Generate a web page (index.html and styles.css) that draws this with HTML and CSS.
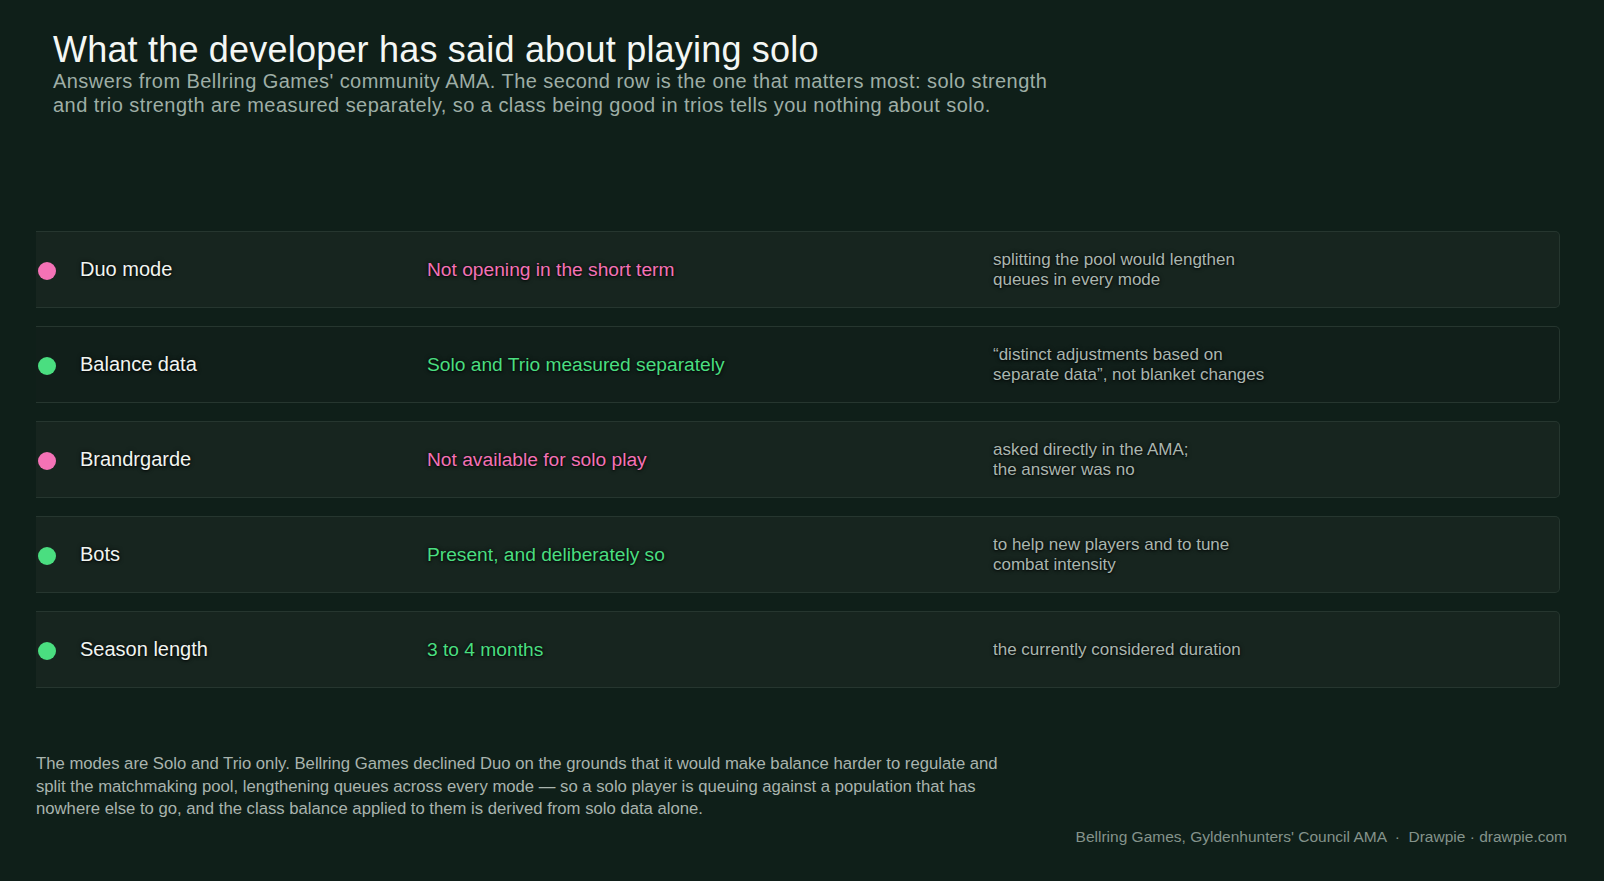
FILE: index.html
```html
<!DOCTYPE html>
<html lang="en">
<head>
<meta charset="utf-8">
<title>What the developer has said about playing solo</title>
<link rel="stylesheet" href="styles.css">
</head>
<body>
<div class="page">
  <header class="head">
    <h1 class="title">What the developer has said about playing solo</h1>
    <p class="subtitle">Answers from Bellring Games' community AMA. The second row is the one that matters most: solo strength and trio strength are measured separately, so a class being good in trios tells you nothing about solo.</p>
  </header>

  <section class="rows">
    <div class="row">
      <span class="dot dot-pink"></span>
      <span class="label">Duo mode</span>
      <span class="value pink">Not opening in the short term</span>
      <span class="note">splitting the pool would lengthen<br>queues in every mode</span>
    </div>
    <div class="row row-key">
      <span class="dot dot-green"></span>
      <span class="label">Balance data</span>
      <span class="value green">Solo and Trio measured separately</span>
      <span class="note">“distinct adjustments based on<br>separate data”, not blanket changes</span>
    </div>
    <div class="row">
      <span class="dot dot-pink"></span>
      <span class="label">Brandrgarde</span>
      <span class="value pink">Not available for solo play</span>
      <span class="note">asked directly in the AMA;<br>the answer was no</span>
    </div>
    <div class="row">
      <span class="dot dot-green"></span>
      <span class="label">Bots</span>
      <span class="value green">Present, and deliberately so</span>
      <span class="note">to help new players and to tune<br>combat intensity</span>
    </div>
    <div class="row">
      <span class="dot dot-green"></span>
      <span class="label">Season length</span>
      <span class="value green">3 to 4 months</span>
      <span class="note">the currently considered duration</span>
    </div>
  </section>

  <p class="summary">The modes are Solo and Trio only. Bellring Games declined Duo on the grounds that it would make balance harder to regulate and split the matchmaking pool, lengthening queues across every mode — so a solo player is queuing against a population that has nowhere else to go, and the class balance applied to them is derived from solo data alone.</p>

  <footer class="source">Bellring Games, Gyldenhunters' Council AMA &nbsp;·&nbsp; Drawpie · drawpie.com</footer>
</div>
</body>
</html>
```

FILE: styles.css
```css
* { box-sizing: border-box; }
html, body {
  margin: 0;
  padding: 0;
  background: #0f1f19;
}
body {
  font-family: "Liberation Sans", Arial, sans-serif;
  color: #eef3ef;
  width: 1604px;
  height: 881px;
  overflow: hidden;
}
.page {
  display: flex;
  flex-direction: column;
  padding: 30px 44px 0 36px;
  height: 881px;
}
.head {
  padding-left: 17px;
}
.title {
  margin: 0;
  font-size: 36px;
  font-weight: 400;
  letter-spacing: 0.2px;
  line-height: 40px;
  color: #f4f7f4;
}
.subtitle {
  margin: 0;
  width: 1012px;
  font-size: 20px;
  letter-spacing: 0.44px;
  line-height: 23.5px;
  color: #9eaea6;
}
.rows {
  margin-top: 114px;
  display: flex;
  flex-direction: column;
  gap: 18px;
}
.row {
  height: 77px;
  display: grid;
  grid-template-columns: 20px 371px 566px 1fr;
  align-items: center;
  background: #17251f;
  border: 1px solid #26362f;
  border-left: none;
  border-radius: 0 5px 5px 0;
  text-shadow: 0 0 4px rgba(0, 0, 0, 0.75), 0 1px 2px rgba(0, 0, 0, 0.6);
}
.row-key {
  background: #111f1a;
}
.dot {
  width: 18px;
  height: 18px;
  margin-left: 2px;
  border-radius: 50%;
  margin-top: 3px;
}
.dot-pink { background: #f472b6; }
.dot-green { background: #4ade80; }
.label {
  padding-left: 24px;
  font-size: 20px;
  color: #f1f5f1;
}
.value {
  font-size: 19.2px;
}
.pink { color: #f472b6; }
.green { color: #4ade80; }
.note {
  font-size: 17px;
  line-height: 20px;
  color: #aab6af;
}
.summary {
  margin: 65px 0 0 0;
  width: 980px;
  font-size: 16.7px;
  line-height: 22.5px;
  color: #a9b4ae;
}
.source {
  margin-top: 7px;
  text-align: right;
  font-size: 15.5px;
  color: #84938b;
  margin-right: -7px;
}
```
